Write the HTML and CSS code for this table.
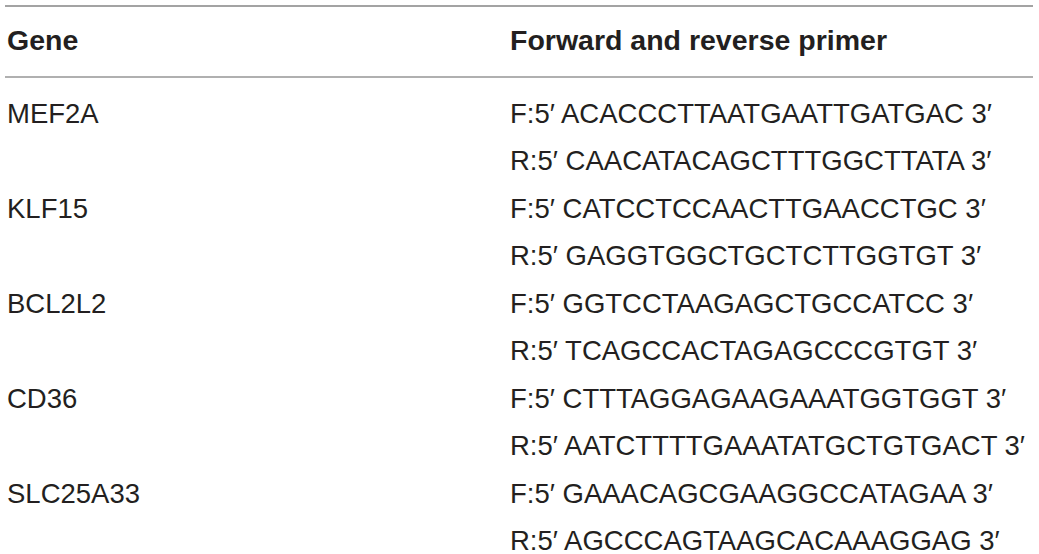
FILE: index.html
```html
<!DOCTYPE html>
<html>
<head>
<meta charset="utf-8">
<link rel="stylesheet" href="styles.css">
</head>
<body>
<table class="primers">
  <thead>
    <tr><th class="gene">Gene</th><th class="seq">Forward and reverse primer</th></tr>
  </thead>
  <tbody>
    <tr class="first"><td class="gene">MEF2A</td><td class="seq">F:5′ ACACCCTTAATGAATTGATGAC 3′</td></tr>
    <tr><td class="gene"></td><td class="seq">R:5′ CAACATACAGCTTTGGCTTATA 3′</td></tr>
    <tr><td class="gene">KLF15</td><td class="seq">F:5′ CATCCTCCAACTTGAACCTGC 3′</td></tr>
    <tr><td class="gene"></td><td class="seq">R:5′ GAGGTGGCTGCTCTTGGTGT 3′</td></tr>
    <tr><td class="gene">BCL2L2</td><td class="seq">F:5′ GGTCCTAAGAGCTGCCATCC 3′</td></tr>
    <tr><td class="gene"></td><td class="seq">R:5′ TCAGCCACTAGAGCCCGTGT 3′</td></tr>
    <tr><td class="gene">CD36</td><td class="seq">F:5′ CTTTAGGAGAAGAAATGGTGGT 3′</td></tr>
    <tr><td class="gene"></td><td class="seq">R:5′ AATCTTTTGAAATATGCTGTGACT 3′</td></tr>
    <tr><td class="gene">SLC25A33</td><td class="seq">F:5′ GAAACAGCGAAGGCCATAGAA 3′</td></tr>
    <tr><td class="gene"></td><td class="seq">R:5′ AGCCCAGTAAGCACAAAGGAG 3′</td></tr>
  </tbody>
</table>
</body>
</html>
```
FILE: styles.css
```css
html, body {
  margin: 0;
  padding: 0;
  background: #ffffff;
}
body {
  padding: 5px 6px 0 5px;
  font-family: "Liberation Sans", Arial, sans-serif;
  color: #231f20;
}
.primers {
  width: 1028px;
  border-collapse: collapse;
  border-top: 2px solid #a3a3a3;
  font-size: 27.5px;
}
.primers th {
  font-size: 28.5px;
  font-weight: bold;
  text-align: left;
  line-height: 47.5px;
  padding: 10px 0 11px 0;
  border-bottom: 2px solid #b0b0b0;
}
.primers td {
  font-weight: normal;
  line-height: 47.5px;
  padding: 0;
  white-space: nowrap;
}
.primers .gene {
  width: 503px;
  padding-left: 2px;
}
.primers .seq {
  padding-left: 0;
}
.primers tr.first td {
  padding-top: 12px;
}
```
